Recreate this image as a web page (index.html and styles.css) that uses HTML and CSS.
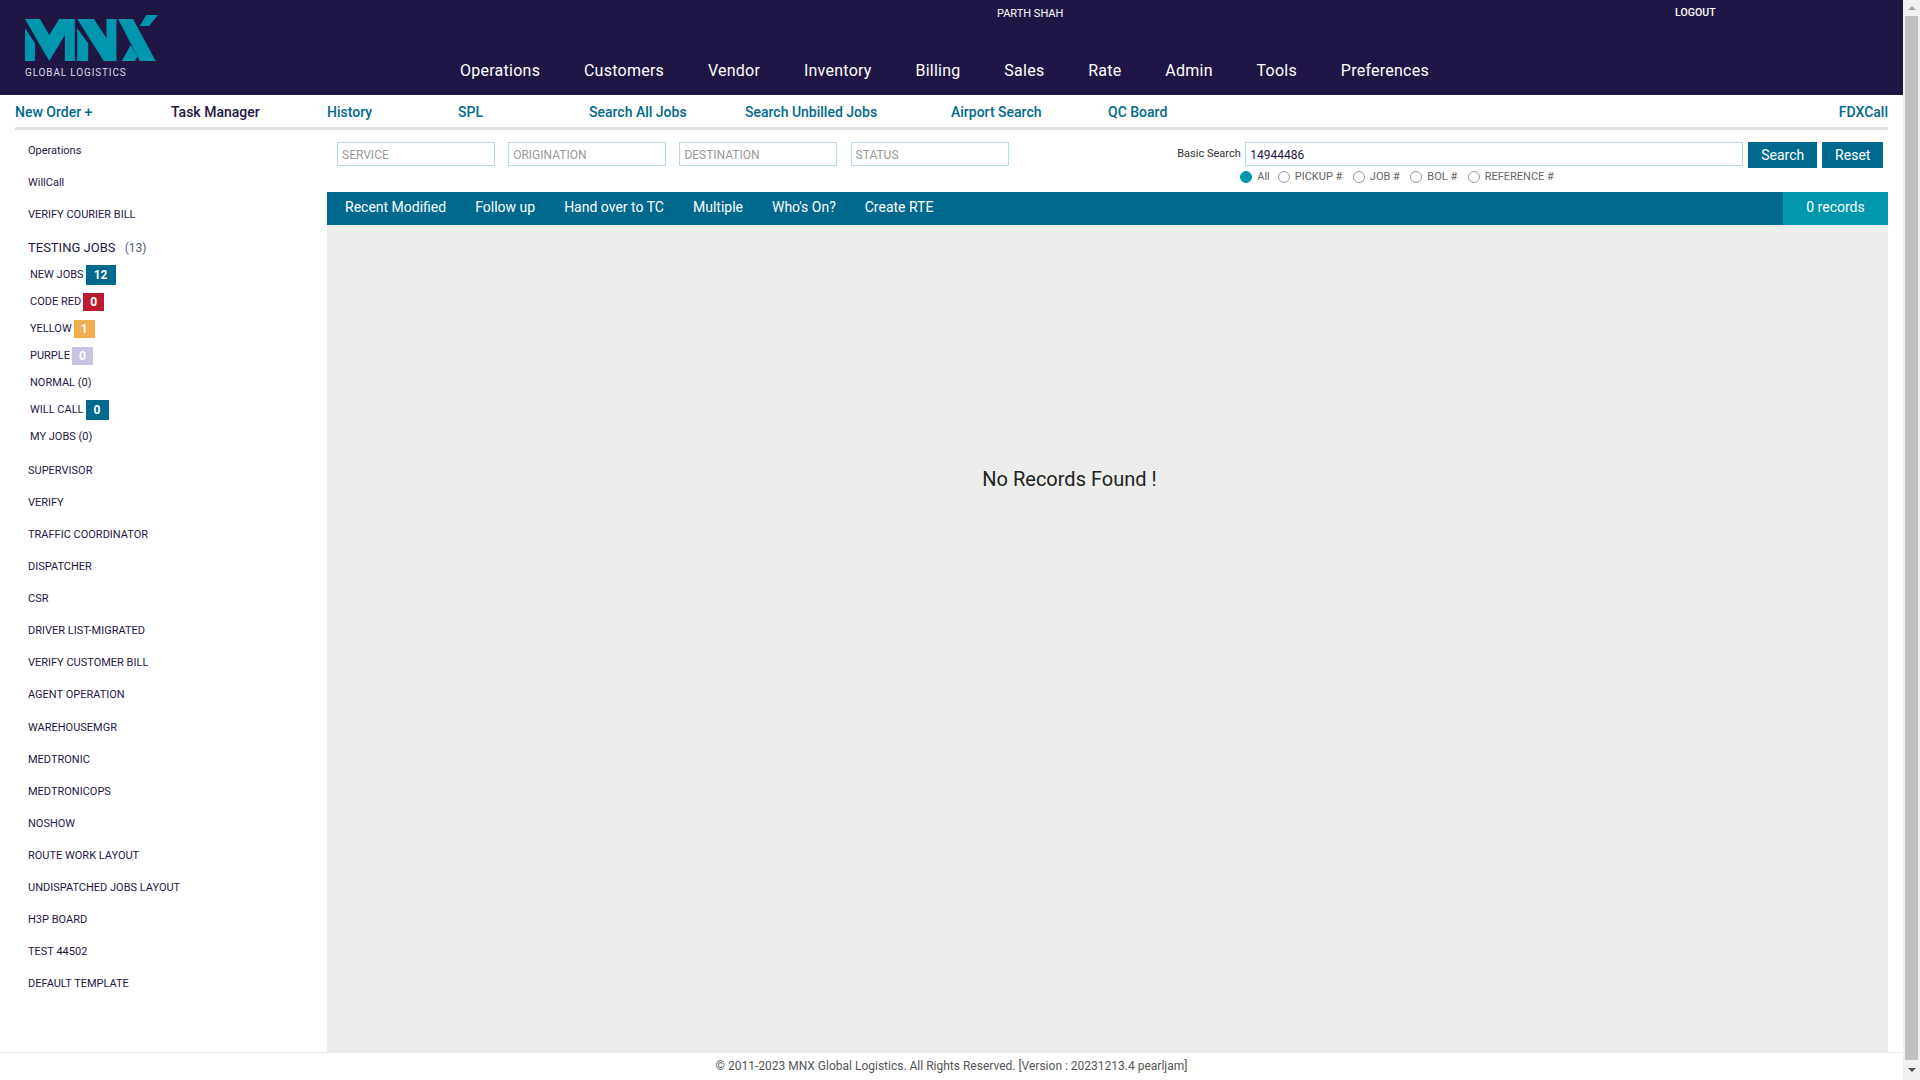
FILE: index.html
```html
<!DOCTYPE html>
<html>
  <head>
    <title>MNX Global Logistics</title>
    <link rel="stylesheet" href="styles.css">
  </head>
  <body>
    <div class="page">
      <header class="header">
        <div class="logo">
          <svg class="logo-mark" viewBox="75 45 400 138" width="133" height="46">
            <polygon points="75,85 105,130 105,183 75,183" />
            <polygon points="75,57 120,57 148,105 178,57 225,57 225,183 195,183 195,105 148,183" />
            <polygon points="232,85 265,130 265,183 232,183" />
            <polygon points="232,57 282,57 320,115 320,57 350,57 350,183 312,183" />
            <polygon points="355,57 400,57 468,183 420,183" />
            <polygon points="420,78 440,45 475,45 448,78" />
            <polygon points="366,183 393,135 413,170 406,183" />
          </svg>
          <div class="logo-text">GLOBAL LOGISTICS</div>
        </div>
        <div class="header-right">
          <div class="user-row">
            <span class="user-name">PARTH SHAH</span>
            <a class="logout">LOGOUT</a>
          </div>
          <nav class="main-nav">
            <a>Operations</a>
            <a>Customers</a>
            <a>Vendor</a>
            <a>Inventory</a>
            <a>Billing</a>
            <a>Sales</a>
            <a>Rate</a>
            <a>Admin</a>
            <a>Tools</a>
            <a>Preferences</a>
          </nav>
        </div>
      </header>

      <div class="sub-nav">
        <a>New Order +</a>
        <a class="dark">Task Manager</a>
        <a>History</a>
        <a>SPL</a>
        <a>Search All Jobs</a>
        <a>Search Unbilled Jobs</a>
        <a>Airport Search</a>
        <a>QC Board</a>
        <a class="right">FDXCall</a>
      </div>

      <div class="content">
        <aside class="sidebar">
          <a class="side-link">Operations</a>
          <a class="side-link">WillCall</a>
          <a class="side-link">VERIFY COURIER BILL</a>
          <div class="group-title">TESTING JOBS <span>(13)</span></div>
          <div class="group">
            <div class="group-row">NEW JOBS <b class="badge tall blue wide">12</b></div>
            <div class="group-row">CODE RED <b class="badge red">0</b></div>
            <div class="group-row">YELLOW <b class="badge yellow">1</b></div>
            <div class="group-row">PURPLE <b class="badge purple">0</b></div>
            <div class="group-row">NORMAL (0)</div>
            <div class="group-row">WILL CALL <b class="badge tall blue">0</b></div>
            <div class="group-row">MY JOBS (0)</div>
          </div>
          <a class="side-link">SUPERVISOR</a>
          <a class="side-link">VERIFY</a>
          <a class="side-link">TRAFFIC COORDINATOR</a>
          <a class="side-link">DISPATCHER</a>
          <a class="side-link">CSR</a>
          <a class="side-link">DRIVER LIST-MIGRATED</a>
          <a class="side-link">VERIFY CUSTOMER BILL</a>
          <a class="side-link">AGENT OPERATION</a>
          <a class="side-link">WAREHOUSEMGR</a>
          <a class="side-link">MEDTRONIC</a>
          <a class="side-link">MEDTRONICOPS</a>
          <a class="side-link">NOSHOW</a>
          <a class="side-link">ROUTE WORK LAYOUT</a>
          <a class="side-link">UNDISPATCHED JOBS LAYOUT</a>
          <a class="side-link">H3P BOARD</a>
          <a class="side-link">TEST 44502</a>
          <a class="side-link">DEFAULT TEMPLATE</a>
        </aside>

        <main class="main">
          <div class="filters">
            <input class="filter" type="text" placeholder="SERVICE" />
            <input class="filter" type="text" placeholder="ORIGINATION" />
            <input class="filter" type="text" placeholder="DESTINATION" />
            <input class="filter" type="text" placeholder="STATUS" />
            <div class="basic-search">
              <div class="search-row">
                <label for="basic">Basic Search</label>
                <input class="search-input" id="basic" type="text" value="14944486" />
                <button class="btn" type="button">Search</button>
                <button class="btn reset" type="button">Reset</button>
              </div>
              <div class="radios">
                <label><input type="radio" name="kind" checked />All</label>
                <label><input type="radio" name="kind" />PICKUP #</label>
                <label><input type="radio" name="kind" />JOB #</label>
                <label><input type="radio" name="kind" />BOL #</label>
                <label><input type="radio" name="kind" />REFERENCE #</label>
              </div>
            </div>
          </div>

          <div class="tabs">
            <a>Recent Modified</a>
            <a>Follow up</a>
            <a>Hand over to TC</a>
            <a>Multiple</a>
            <a>Who's On?</a>
            <a>Create RTE</a>
            <div class="records">0 records</div>
          </div>

          <div class="results">No Records Found !</div>
        </main>
      </div>

      <footer class="footer">© 2011-2023 MNX Global Logistics. All Rights Reserved. [Version : 20231213.4 pearljam]</footer>
    </div>

    <div class="scrollbar">
      <div class="arrow up"></div>
      <div class="thumb"></div>
      <div class="arrow down"></div>
    </div>
  </body>
</html>
```

FILE: styles.css
```css
* {
  box-sizing: border-box;
}

html,
body {
  height: 100%;
  margin: 0;
  overflow: hidden;
}

body {
  display: flex;
  font-family: Roboto, Arial, sans-serif;
  background-color: #fff;
  color: #1f1646;
}

.page {
  flex: 1;
  display: flex;
  flex-direction: column;
  min-width: 0;
}

/* header */
.header {
  display: flex;
  height: 95px;
  background-color: #1f1646;
  color: #fff;
}

.logo {
  width: 460px;
  padding: 15px 0 0 25px;
}

.logo-mark {
  display: block;
  fill: #0097ae;
}

.logo-text {
  margin-top: 6px;
  font-size: 10px;
  line-height: 12px;
  letter-spacing: 0.85px;
  color: #d9d9e3;
}

.header-right {
  flex: 1;
}

.user-row {
  display: flex;
  height: 58px;
  padding-top: 7px;
  font-size: 11px;
  line-height: 13px;
}

.user-name {
  width: 1215px;
  padding-left: 537px;
}

.logout {
  font-size: 10.5px;
  font-weight: 500;
  line-height: 11px;
  letter-spacing: 0.1px;
}

.main-nav {
  display: flex;
  gap: 43.8px;
  font-size: 16px;
  line-height: 26px;
  letter-spacing: 0.25px;
}

/* second row of links */
.sub-nav {
  display: grid;
  grid-template-columns: 156px 156px 131px 131px 156px 206px 157px auto 1fr;
  align-items: center;
  height: 35px;
  margin: 0 15px;
  padding-top: 1px;
  border-bottom: 3px solid #e0e0e0;
  font-size: 14px;
  font-weight: 500;
  color: #006a8e;
}

.sub-nav .dark {
  color: #1f1646;
}

.sub-nav .right {
  justify-self: end;
}

.content {
  flex: 1;
  display: flex;
  min-height: 0;
}

/* left column */
.sidebar {
  width: 327px;
  padding: 5px 0 0 28px;
  font-size: 11px;
}

.side-link {
  display: block;
  height: 32.05px;
  line-height: 32px;
}

.group-title {
  height: 27px;
  margin-top: 3px;
  font-size: 13px;
  line-height: 27px;
}

.group-title span {
  margin-left: 6px;
  font-size: 12px;
  color: #4e5a75;
}

.group {
  margin-bottom: 5px;
  padding-left: 2px;
}

.group-row {
  display: flex;
  align-items: center;
  gap: 2px;
  height: 27px;
}

.badge {
  display: block;
  width: 21px;
  height: 18px;
  font-size: 12px;
  font-weight: 700;
  line-height: 18px;
  text-align: center;
  color: #fff;
}

.badge.tall {
  width: 23px;
  height: 20px;
  line-height: 20px;
}

.badge.wide {
  width: 30px;
}

.blue {
  background-color: #006a8e;
}

.red {
  background-color: #bb1a31;
}

.yellow {
  background-color: #f1ad4e;
}

.purple {
  background-color: #cbc3e3;
}

/* right column */
.main {
  flex: 1;
  display: flex;
  flex-direction: column;
  margin-right: 15px;
}

.filters {
  display: flex;
  gap: 13.2px;
  height: 62px;
  padding: 12px 0 0 10px;
}

.filter {
  width: 158px;
  height: 24px;
  padding: 1px 4px 0;
  border: 1px solid #b5dae2;
  border-radius: 0;
  outline: none;
  font-family: inherit;
  font-size: 12px;
}

.filter::placeholder {
  color: #999;
}

.basic-search {
  margin-left: 155.5px;
}

.search-row {
  display: flex;
  align-items: flex-start;
}

.search-row label {
  width: 68px;
  padding-top: 5px;
  font-size: 11px;
  color: #333;
}

.search-input {
  width: 498px;
  height: 24px;
  padding: 1px 4px 0;
  border: 1px solid #b5dae2;
  outline: none;
  font-family: inherit;
  font-size: 12px;
  color: #1f1646;
}

.btn {
  width: 69px;
  height: 26px;
  margin-left: 5px;
  padding: 0;
  border: none;
  background-color: #006a8e;
  color: #fff;
  font-family: inherit;
  font-size: 14px;
}

.btn.reset {
  width: 61px;
}

.radios {
  display: flex;
  margin: 3px 0 0 63px;
  font-size: 11px;
  line-height: 12px;
  color: #666;
}

.radios label {
  display: flex;
  align-items: center;
  margin-right: 10.5px;
}

.radios label:first-child {
  margin-right: 8px;
}

.radios input {
  appearance: none;
  width: 12px;
  height: 12px;
  margin: 0 5px 0 0;
  border: 1px solid #999;
  border-radius: 50%;
}

.radios input:checked {
  border-color: #0097ae;
  background-color: #0097ae;
}

.tabs {
  display: flex;
  align-items: center;
  gap: 29px;
  flex-shrink: 0;
  height: 33px;
  padding-left: 18px;
  background-color: #006a8e;
  color: #fff;
  font-size: 14px;
}

.tabs a {
  margin-bottom: 3px;
}

.records {
  align-self: stretch;
  width: 105px;
  margin-left: auto;
  background-color: #0097ae;
  line-height: 31px;
  text-align: center;
}

.results {
  flex: 1;
  padding: 242px 76px 0 0;
  background-color: #eceeeb;
  font-size: 20px;
  line-height: 24px;
  text-align: center;
  color: #222;
}

/* bottom */
.footer {
  flex-shrink: 0;
  height: 28px;
  border-top: 1px solid #e8eeee;
  font-size: 12px;
  line-height: 26px;
  text-align: center;
  color: #555;
}

.scrollbar {
  display: flex;
  flex-direction: column;
  width: 17px;
  background-color: #f1f1f1;
}

.arrow {
  flex-shrink: 0;
  height: 17px;
  margin: 0 auto;
  width: 0;
  border-left: 4px solid transparent;
  border-right: 4px solid transparent;
}

.arrow.up {
  height: 0;
  margin-top: 6px;
  margin-bottom: 6px;
  border-bottom: 4px solid #a3a3a3;
}

.arrow.down {
  height: 0;
  margin-top: 8px;
  margin-bottom: 8px;
  border-top: 4px solid #505050;
}

.thumb {
  flex: 1;
  margin: 0 2px;
  background-color: #c1c1c1;
}
```
